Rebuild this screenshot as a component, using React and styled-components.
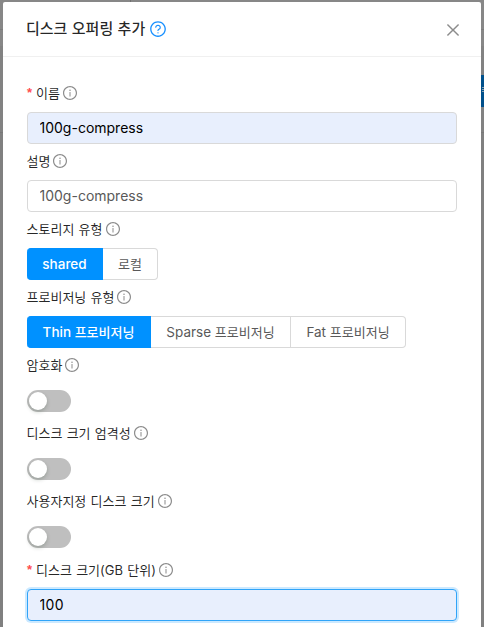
import React from "react";
import styled, { createGlobalStyle, css } from "styled-components";
import { AiOutlineClose, AiOutlineInfoCircle, AiOutlineQuestionCircle } from "react-icons/ai";

const GlobalStyle = createGlobalStyle`
  * { box-sizing: border-box; }
  body {
    margin: 0;
    overflow: hidden;
    font-family: Inter, "Noto Sans CJK KR", sans-serif;
    font-size: 14px;
    color: rgba(0, 0, 0, 0.85);
  }
`;

const Page = styled.div`
  position: relative;
  height: 627px;
  padding: 2px 3px 0;
  overflow: hidden;
  background: linear-gradient(#878787 0 29px, #7c7c7c 29px 30px, #878787 30px 46px, #828282 46px 132px, #787878 132px 133px, #808080 133px);
`;

const BackdropTick = styled.div`
  position: absolute;
  top: 0;
  left: 130px;
  width: 1px;
  height: 2px;
  background: #707070;
`;

const BackdropButton = styled.div`
  position: absolute;
  top: 75px;
  right: 0;
  width: 3px;
  height: 32px;
  padding-top: 11px;
  overflow: hidden;
  background: #00508b;
`;

const ButtonMark = styled.div`
  width: 3px;
  height: 1px;
  margin: 1px 0 1px 1px;
  background: #8a9dac;
`;

const Modal = styled.section`
  position: relative;
  width: 478px;
  height: 640px;
  border-radius: 2px;
  background: #fff;
`;

const Header = styled.header`
  display: flex;
  align-items: center;
  justify-content: space-between;
  height: 55px;
  padding: 0 19px 0 23px;
  border-bottom: 1px solid #f0f0f0;
`;

const Title = styled.h1`
  display: flex;
  align-items: center;
  gap: 4px;
  margin: 0;
  font-size: 15px;
  font-weight: 500;
  line-height: 22px;
  word-spacing: 0.4px;
  white-space: nowrap;
  svg { width: 18px; height: 18px; color: #1890ff; }
`;

const CloseButton = styled.button`
  display: flex;
  margin-top: 2px;
  padding: 0;
  border: 0;
  background: none;
  color: #8c8c8c;
  svg { width: 18px; height: 18px; }
`;

const Form = styled.form`
  padding: 19px 24px 0;
`;

const Field = styled.div`
  height: ${(p) => (p.$tall ? 69 : 68)}px;
`;

const Label = styled.div`
  display: flex;
  align-items: center;
  height: 36px;
  padding-bottom: 2px;
  font-size: 13px;
  word-spacing: 0.6px;
  white-space: nowrap;
  svg { width: 16px; height: 16px; margin-left: 2px; color: #8c8c8c; }
`;

const LabelText = styled.span`
  margin-left: -0.5px;
  padding-bottom: 2px;
`;

const Required = styled.span`
  width: 9.5px;
  padding-bottom: 2px;
  font-family: "Liberation Sans", sans-serif;
  font-size: 13px;
  font-weight: 700;
  color: #ff4d4f;
`;

const Input = styled.input`
  display: block;
  width: 430px;
  height: 32px;
  padding: 0 11.5px 2px;
  border: 1px solid #d9d9d9;
  border-radius: 4px;
  outline: 0;
  font: inherit;
  color: #595959;
  background: #fff;
  ${(p) => p.$filled && css`color: #000; background: #e8effd;`}
  ${(p) => p.$active && css`
    border-color: #30a4f8;
    box-shadow: 0 0 0 2px #cce9ff;
    letter-spacing: 0.4px;
  `}
`;

const Segments = styled.div`
  display: flex;
  height: 32px;
`;

const Segment = styled.button`
  width: ${(p) => p.$width}px;
  padding: 0 0 ${(p) => (p.$latin ? 0 : 2)}px;
  border: 1px solid #d9d9d9;
  border-left: 0;
  background: #fff;
  color: #595959;
  font: inherit;
  font-size: 13.5px;
  white-space: nowrap;
  &:first-child { border-radius: 4px 0 0 4px; }
  &:last-child { border-radius: 0 4px 4px 0; }
  ${(p) => p.$selected && css`
    border-color: #0091ff;
    background: #0091ff;
    color: #fff;
    font-weight: 500;
  `}
`;

const Hangul = styled.span`
  font-size: 13px;
`;

const Switch = styled.button`
  display: block;
  width: 44px;
  height: 22px;
  margin-top: 6px;
  padding: 2px;
  border: 0;
  border-radius: 11px;
  background: #bfbfbf;
`;

const Knob = styled.span`
  display: block;
  width: 18px;
  height: 18px;
  border-radius: 50%;
  background: #fff;
  box-shadow: 0 2px 4px rgba(0, 35, 11, 0.2);
`;

function FormField({ label, required, tall, children }) {
  return (
    <Field $tall={tall}>
      <Label>
        {required && <Required>*</Required>}
        <LabelText>{label}</LabelText>
        <AiOutlineInfoCircle />
      </Label>
      {children}
    </Field>
  );
}

function Toggle({ label }) {
  return (
    <Switch type="button" role="switch" aria-checked="false" aria-label={label}>
      <Knob />
    </Switch>
  );
}

export default function App() {
  return (
    <Page>
      <GlobalStyle />
      <BackdropTick />
      <BackdropButton><ButtonMark /><ButtonMark /><ButtonMark /></BackdropButton>
      <Modal>
        <Header>
          <Title>디스크 오퍼링 추가<AiOutlineQuestionCircle /></Title>
          <CloseButton type="button" aria-label="닫기"><AiOutlineClose /></CloseButton>
        </Header>
        <Form>
          <FormField label="이름" required><Input $filled defaultValue="100g-compress" /></FormField>
          <FormField label="설명"><Input defaultValue="100g-compress" /></FormField>
          <FormField label="스토리지 유형">
            <Segments>
              <Segment type="button" $width={76} $latin $selected>shared</Segment>
              <Segment type="button" $width={55}><Hangul>로컬</Hangul></Segment>
            </Segments>
          </FormField>
          <FormField label="프로비저닝 유형">
            <Segments>
              <Segment type="button" $width={124} $selected>Thin <Hangul>프로비저닝</Hangul></Segment>
              <Segment type="button" $width={140}>Sparse <Hangul>프로비저닝</Hangul></Segment>
              <Segment type="button" $width={115}>Fat <Hangul>프로비저닝</Hangul></Segment>
            </Segments>
          </FormField>
          <FormField label="암호화"><Toggle label="암호화" /></FormField>
          <FormField label="디스크 크기 엄격성"><Toggle label="디스크 크기 엄격성" /></FormField>
          <FormField label="사용자지정 디스크 크기" tall><Toggle label="사용자지정 디스크 크기" /></FormField>
          <FormField label="디스크 크기(GB 단위)" required><Input $filled $active defaultValue="100" /></FormField>
        </Form>
      </Modal>
    </Page>
  );
}
